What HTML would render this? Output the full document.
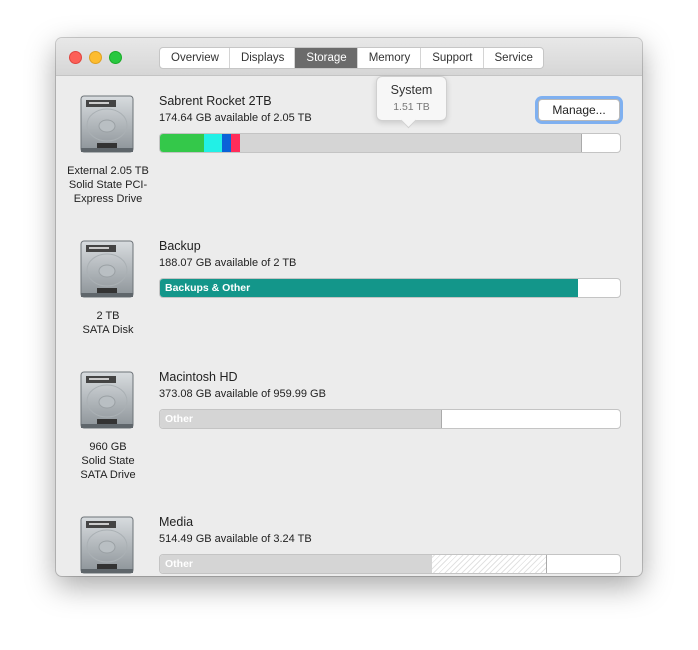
<!DOCTYPE html>
<html><head><style>
body{margin:0;width:698px;height:650px;background:#fff;font-family:"Liberation Sans",sans-serif;position:relative;overflow:hidden}
.win{position:absolute;left:56px;top:38px;width:586px;height:538px;background:#ececec;border-radius:6px;box-shadow:0 10px 30px rgba(0,0,0,.35),0 0 0 1px rgba(0,0,0,.18);overflow:hidden}
.tb{position:absolute;left:0;top:0;width:100%;height:37px;background:linear-gradient(#e8e8e8,#d6d6d6);border-bottom:1px solid #c4c4c4}
.dot{position:absolute;top:13px;width:12px;height:12px;border-radius:50%}
.tabs{position:absolute;left:103px;top:9px;height:20px;display:flex;border:1px solid #c6c6c6;border-radius:4px;background:#fff;overflow:hidden;font-size:11.5px;color:#333}
.tabs div{padding:0 10px 0 11px;line-height:20px;border-right:1px solid #d4d4d4}
.tabs div:last-child{border-right:0}
.tabs .on{background:#6b6b6b;color:#fff}
.a{position:absolute;font-size:12.5px;color:#222}
.s{position:absolute;font-size:11px;color:#222}
.c{position:absolute;font-size:11px;color:#222;text-align:center;width:110px;line-height:14px}
.bar{position:absolute;left:103px;width:460px;height:18px;border:1px solid #c4c4c4;border-radius:4px;background:#fff;overflow:hidden}
.bar div{position:absolute;top:0;height:18px}
.lbl{color:#fff;font-size:10.5px;line-height:18px;padding-left:5px;font-weight:bold}
.disk{position:absolute;left:22px;width:58px;height:58px}
</style></head><body>
<div class="win">
<div class="tb">
<div class="dot" style="left:13px;background:#fc5f57;border:1px solid #e0443e;width:11px;height:11px"></div>
<div class="dot" style="left:33px;background:#fdbc2e;border:1px solid #dea123;width:11px;height:11px"></div>
<div class="dot" style="left:53px;background:#28c840;border:1px solid #1aab29;width:11px;height:11px"></div>
<div class="tabs"><div>Overview</div><div>Displays</div><div class="on">Storage</div><div>Memory</div><div>Support</div><div>Service</div></div>
</div>

<svg width="0" height="0" style="position:absolute"><defs>
<linearGradient id="g" x1="0" y1="0" x2="0" y2="1"><stop offset="0" stop-color="#d8dcdf"/><stop offset="1" stop-color="#8c9398"/></linearGradient>
<symbol id="hd" viewBox="0 0 58 58"><rect x="3" y="1" width="52" height="56" rx="3" fill="url(#g)" stroke="#6d7378"/><rect x="8" y="5" width="30" height="7" fill="#444"/><rect x="11" y="7" width="20" height="2" fill="#ccc"/><ellipse cx="29" cy="30" rx="20" ry="16" fill="none" stroke="#aab0b4"/><ellipse cx="29" cy="31" rx="8" ry="6" fill="#b9bfc3" stroke="#9aa0a4"/><rect x="19" y="48" width="20" height="6" fill="#333"/><rect x="3" y="53" width="52" height="4" fill="#5f666b"/></symbol>
</defs></svg>

<svg class="disk" style="top:57px"><use href="#hd"/></svg>
<div class="c" style="left:-3px;top:126px">External 2.05 TB<br>Solid State PCI-<br>Express Drive</div>
<div class="a" style="left:103px;top:56px">Sabrent Rocket 2TB</div>
<div class="s" style="left:103px;top:74px">174.64 GB available of 2.05 TB</div>
<div class="bar" style="top:95px"><div style="left:0;width:44px;background:#34c84a"></div><div style="left:44px;width:18px;background:#22f0e6"></div><div style="left:62px;width:9px;background:#0a62d8"></div><div style="left:71px;width:9px;background:#ff2d5a"></div><div style="left:80px;width:341px;background:#d5d5d5;border-right:1px solid #aaa"></div></div>
<div style="position:absolute;left:320px;top:38px;width:69px;height:43px;background:#f7f7f7;border:1px solid #d0d0d0;border-radius:6px;box-shadow:0 2px 6px rgba(0,0,0,.15);text-align:center">
<div style="font-size:12.5px;color:#333;margin-top:6px">System</div><div style="font-size:10.5px;color:#777;margin-top:4px">1.51 TB</div></div>
<div style="position:absolute;left:347px;top:77px;width:10px;height:10px;background:#f7f7f7;transform:rotate(45deg);border-right:1px solid #d0d0d0;border-bottom:1px solid #d0d0d0"></div>
<div style="position:absolute;left:482px;top:61px;width:80px;height:20px;background:#fff;border:1px solid #b8b8b8;border-radius:4px;box-shadow:0 0 0 3px #7fb0f0;font-size:12px;text-align:center;line-height:20px;color:#222">Manage...</div>

<svg class="disk" style="top:202px"><use href="#hd"/></svg>
<div class="c" style="left:-3px;top:271px">2 TB<br>SATA Disk</div>
<div class="a" style="left:103px;top:201px">Backup</div>
<div class="s" style="left:103px;top:219px">188.07 GB available of 2 TB</div>
<div class="bar" style="top:240px"><div class="lbl" style="left:0;width:413px;background:#13968a">Backups &amp; Other</div></div>

<svg class="disk" style="top:333px"><use href="#hd"/></svg>
<div class="c" style="left:-3px;top:402px">960 GB<br>Solid State<br>SATA Drive</div>
<div class="a" style="left:103px;top:332px">Macintosh HD</div>
<div class="s" style="left:103px;top:350px">373.08 GB available of 959.99 GB</div>
<div class="bar" style="top:371px"><div class="lbl" style="left:0;width:276px;background:#d5d5d5;border-right:1px solid #aaa">Other</div></div>

<svg class="disk" style="top:478px"><use href="#hd"/></svg>
<div class="a" style="left:103px;top:477px">Media</div>
<div class="s" style="left:103px;top:495px">514.49 GB available of 3.24 TB</div>
<div class="bar" style="top:516px"><div class="lbl" style="left:0;width:267px;background:#d5d5d5;border-right:1px solid #aaa">Other</div><div style="left:272px;width:114px;border-right:1px solid #aaa;background:repeating-linear-gradient(-45deg,#fff 0 3px,#e2e2e2 3px 4px)"></div></div>
</div>
</body></html>
